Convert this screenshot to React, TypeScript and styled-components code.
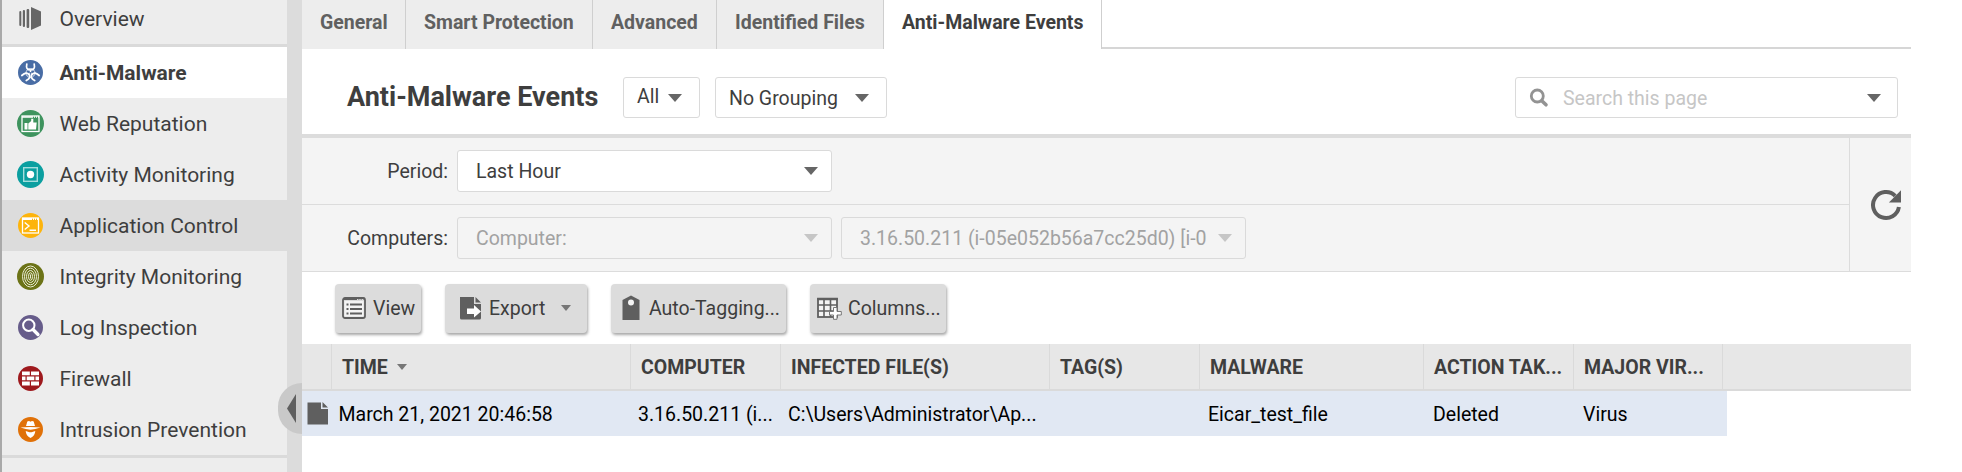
import React from 'react';
import styled, { createGlobalStyle, css } from 'styled-components';

const GlobalStyle = createGlobalStyle`
  * { box-sizing: border-box; }
  body { margin: 0; background: #fff; font-family: Roboto, "Liberation Sans", sans-serif; color: #3e3e3e; overflow: hidden; }
`;

const Page = styled.div`
  display: flex;
  height: 472px;
  width: 1962px;
  overflow: hidden;
`;

const Sidebar = styled.nav`
  width: 287px;
  flex: none;
  background: #ededed;
  border-left: 2px solid #a9a9a9;
`;

const NavItem = styled.div<{ $active?: boolean; $hover?: boolean; $first?: boolean }>`
  display: flex;
  align-items: center;
  height: 51px;
  padding-left: 15px;
  gap: 15.5px;
  font-size: 21px;
  white-space: nowrap;
  ${p => p.$active && css`background: #fff; font-weight: 700;`}
  ${p => p.$hover && css`background: #dcdcdc;`}
  ${p => p.$first && css`height: 44px; padding-bottom: 7px;`}
  svg { flex: none; }
`;

const NavRule = styled.div`
  height: 3px;
  background: #dadada;
`;

const Splitter = styled.div`
  position: relative;
  width: 15px;
  flex: none;
  background: #dcdcdc;
`;

const Collapse = styled.div`
  position: absolute;
  left: -9px;
  top: 383px;
  width: 24px;
  height: 51px;
  background: #c9c9c9;
  border-radius: 26px 0 0 26px / 25.5px 0 0 25.5px;
  svg { position: absolute; left: 9px; top: 11px; }
`;

const Main = styled.main`
  width: 1609px;
  flex: none;
`;

const TabBar = styled.div`
  display: flex;
  height: 49px;
`;

const Tab = styled.div<{ $w: number; $active?: boolean }>`
  width: ${p => p.$w}px;
  padding: 11px 0 0 18px;
  font-size: 19.5px;
  line-height: 24px;
  font-weight: 700;
  white-space: nowrap;
  color: ${p => (p.$active ? '#3e3e3e' : '#606060')};
  background: ${p => (p.$active ? '#fff' : '#ededed')};
  border-right: 1px solid #cfcfcf;
`;

const TabFill = styled.div`
  flex: 1;
  border-bottom: 2px solid #d6d6d6;
`;

const Header = styled.header`
  display: flex;
  align-items: flex-start;
  height: 89px;
  padding: 28px 13px 0 45px;
  border-bottom: 4px solid #dcdcdc;
`;

const Title = styled.h1`
  margin: 0;
  width: 276px;
  font-size: 27px;
  line-height: 41px;
  font-weight: 700;
  white-space: nowrap;
`;

const Field = styled.div<{ $w: number; $h?: number; $pad?: number; $padRight?: number; $disabled?: boolean }>`
  display: flex;
  align-items: center;
  justify-content: space-between;
  width: ${p => p.$w}px;
  height: ${p => p.$h ?? 41}px;
  padding: 0 ${p => p.$padRight ?? 13}px 0 ${p => p.$pad ?? 13}px;
  border: 1px solid #dadada;
  border-radius: 3px;
  font-size: 19.5px;
  white-space: nowrap;
  background: ${p => (p.$disabled ? 'transparent' : '#fff')};
  color: ${p => (p.$disabled ? '#a2a2a2' : '#3e3e3e')};
`;

const ScopeLabel = styled.span`
  padding-bottom: 2px;
`;

const GroupingLabel = styled.span`
  padding-top: 2px;
`;

const HeaderFields = styled.div`
  display: flex;
  gap: 15px;
`;

const Search = styled(Field)`
  margin-left: auto;
  justify-content: flex-start;
`;

const Placeholder = styled.span`
  margin-left: 14px;
  padding-top: 2px;
  flex: 1;
  color: #c6c6c6;
`;

const Filters = styled.section`
  display: flex;
  height: 134px;
  background: #f4f4f4;
  border-bottom: 1px solid #dcdcdc;
`;

const FilterRows = styled.div`
  width: 1548px;
  border-right: 1px solid #dcdcdc;
`;

const FilterRow = styled.div`
  display: flex;
  align-items: center;
  height: 66px;
  gap: 9px;
  &:first-child { height: 67px; border-bottom: 1px solid #dcdcdc; }
`;

const FilterLabel = styled.label`
  width: 146px;
  text-align: right;
  font-size: 19.5px;
`;

const Refresh = styled.div`
  flex: 1;
  padding: 51px 0 0 21px;
`;

const Toolbar = styled.div`
  display: flex;
  gap: 24px;
  height: 72px;
  padding: 12px 0 0 33px;
`;

const ToolButton = styled.div<{ $w: number; $pad?: number; $gap?: number }>`
  display: flex;
  align-items: center;
  width: ${p => p.$w}px;
  height: 48.5px;
  padding-left: ${p => p.$pad ?? 7}px;
  gap: ${p => p.$gap ?? 6}px;
  font-size: 19.5px;
  white-space: nowrap;
  background: #dcdcdc;
  border-radius: 4px;
  box-shadow: 1px 2px 3px rgba(0, 0, 0, 0.35);
`;

const ExportLabel = styled.span`
  margin-right: 9px;
`;

const headColumns = '30px 299px 150px 269px 150px 224px 150px 149px 1fr';
const rowColumns = '28.5px 299.5px 150px 269.5px 150.5px 225px 150px 1fr';

const HeadRow = styled.div`
  display: grid;
  grid-template-columns: ${headColumns};
  height: 47px;
  background: #e7e7e7;
  border-bottom: 2px solid #dadada;
`;

const HeadCell = styled.div`
  display: flex;
  align-items: center;
  gap: 9px;
  padding-top: 1px;
  padding-left: 10px;
  border-right: 1px solid #dadada;
  font-size: 19.5px;
  font-weight: 700;
  white-space: nowrap;
  &:last-child { border-right: 0; }
`;

const DataRow = styled.div`
  display: grid;
  grid-template-columns: ${rowColumns};
  width: 1425px;
  height: 45px;
  background: #e1e8f3;
`;

const Cell = styled.div`
  display: flex;
  align-items: center;
  padding-top: 2px;
  padding-left: 8px;
  font-size: 19.5px;
  color: #000;
  white-space: nowrap;
  &:first-child { padding-left: 5px; padding-top: 0; }
`;

const Caret = ({ w = 14, h = 8, color = '#666' }: { w?: number; h?: number; color?: string }) => (
  <svg width={w} height={h} viewBox="0 0 14 8" preserveAspectRatio="none">
    <path d="M0 0H14L7 8Z" fill={color} />
  </svg>
);

const Disc = ({ color, r = 12.5, children }: { color: string; r?: number; children: React.ReactNode }) => (
  <svg width="27" height="27" viewBox="0 0 27 27">
    <circle cx="13.5" cy="13.5" r={r} fill={color} />
    {children}
  </svg>
);

const OverviewIcon = () => (
  <svg width="27" height="27" viewBox="0 0 27 27" fill="#666">
    <rect x="2.3" y="6" width="2" height="15" rx="1" />
    <rect x="5.8" y="5" width="2.2" height="17" rx="1" />
    <rect x="9.6" y="4" width="2.6" height="19" rx="1" />
    <path d="M14 2L24 6.5V20.5L14 25Z" />
  </svg>
);

const MalwareIcon = () => (
  <Disc color="#496da5">
    <g fill="none" stroke="#fff" strokeLinecap="round">
      <path d="M9.800 5Q8.500 11 13.500 11T17.200 5" strokeWidth="1.700" />
      <path d="M4.800 16.500Q9.500 12.200 12 15.500T9.300 21.500" strokeWidth="1.700" />
      <path d="M22.200 16.500Q17.500 12.200 15 15.500T17.700 21.500" strokeWidth="1.700" />
      <path d="M13.500 11V14M13.500 14L11.500 15.300M13.500 14L15.500 15.300" strokeWidth="1.500" />
      <circle cx="13.500" cy="14" r="4.500" strokeWidth="0.800" />
    </g>
    <circle cx="13.5" cy="14" r="1" fill="#496da5" />
  </Disc>
);

const WebIcon = () => (
  <Disc color="#3e935e" r={13.5}>
    <rect x="5" y="6" width="17" height="15.5" fill="none" stroke="#fff" strokeWidth="1.3" />
    <path d="M5 7H16M17 7H18M19 7H20M21 7H22" stroke="#fff" strokeWidth="1.6" />
    <path d="M7.500 13H10.500V19.500H7.500ZM11.300 13.500L14.200 11V8.800H16.300V12.500H19.700L19 19.500H11.300Z" fill="#fff" />
  </Disc>
);

const ActivityIcon = () => (
  <Disc color="#0b9fa0" r={13.5}>
    <rect x="6.7" y="6.7" width="13.6" height="13.6" fill="none" stroke="#a5dedd" strokeWidth="1.4" />
    <circle cx="13.5" cy="13.5" r="3.7" fill="#fff" />
  </Disc>
);

const AppIcon = () => (
  <Disc color="#fdb40c">
    <rect x="5.5" y="6" width="16" height="15" fill="none" stroke="#fff" strokeWidth="1.3" />
    <path d="M5.500 7H15M16 7H17M18 7H19M20 7H21.500" stroke="#fff" strokeWidth="2" />
    <path d="M7.700 10.500L12 14L7.700 17.500M12.500 18.300H19" fill="none" stroke="#fff" strokeWidth="1.4" />
  </Disc>
);

const IntegrityIcon = () => (
  <Disc color="#6c7317" r={13.5}>
    <g fill="none" stroke="#e9ebd5" strokeWidth="1">
      <ellipse cx="13.5" cy="13.5" rx="8" ry="10.5" />
      <ellipse cx="13.5" cy="13.5" rx="6" ry="8.3" />
      <ellipse cx="13.5" cy="13.5" rx="4" ry="6" />
      <ellipse cx="13.5" cy="13.5" rx="2" ry="3.8" />
      <path d="M13.500 11.500V15.500" />
    </g>
  </Disc>
);

const LogIcon = () => (
  <Disc color="#665c8a">
    <circle cx="11.8" cy="11.3" r="5.7" fill="none" stroke="#fff" strokeWidth="2" />
    <path d="M16 15.500L21 20.500" stroke="#fff" strokeWidth="3.3" strokeLinecap="round" />
  </Disc>
);

const FirewallIcon = () => (
  <Disc color="#9e191d">
    <path fill="#fff" d="M5 6.500H12.800V10.200H5ZM14 6.500H22V10.200H14ZM5 11.500H8.500V15.300H5ZM9.700 11.500H17.300V15.300H9.700ZM18.500 11.500H22V15.300H18.500ZM5 16.600H12.800V20.500H5ZM14 16.600H22V20.500H14Z" />
  </Disc>
);

const IntrusionIcon = () => (
  <Disc color="#e07108">
    <path fill="#fff" d="M9 10L10.300 5.500Q12 4.500 13.500 5.700Q15 4.500 16.700 5.500L18 10ZM3.500 11.600Q8 10.900 13.500 10.900T23.500 11.600Q18 13.700 13.500 13.700T3.500 11.600Z" />
    <path fill="#fff" d="M8.700 15L12.500 16.200H14.500L18.300 15Q18 20 13.500 22Q9 20 8.700 15Z" />
  </Disc>
);

const SearchIcon = () => (
  <svg width="20" height="20" viewBox="0 0 20 20" fill="none" stroke="#939393">
    <circle cx="8.3" cy="8" r="6" strokeWidth="2.8" />
    <path d="M13 13L17 16.800" strokeWidth="3.6" strokeLinecap="round" />
  </svg>
);

const RefreshIcon = () => (
  <svg width="31" height="32" viewBox="0 0 31 32">
    <path d="M24.200 6.800A13 13 0 1 0 27.900 18" fill="none" stroke="#5f5f5f" strokeWidth="4" />
    <path d="M30 1.200V13.500H17.900Z" fill="#5f5f5f" />
  </svg>
);

const ViewIcon = () => (
  <svg width="25" height="22" viewBox="0 0 25 22">
    <rect x="1" y="1" width="22" height="20" rx="2" fill="none" stroke="#5f5f5f" strokeWidth="1.8" />
    <path d="M1 2H15M16 1.500H17.500M18.500 1.500H20M21 1.500H22.500" stroke="#5f5f5f" strokeWidth="2" />
    <rect x="2.5" y="4" width="19" height="15.5" fill="#f4f4f4" />
    <path d="M4.500 7.500H6.500M4.500 12H6.500M4.500 16.500H6.500M8 7.500H20M8 12H20M8 16.500H20" stroke="#5f5f5f" strokeWidth="2" />
  </svg>
);

const ExportIcon = () => (
  <svg width="22" height="24" viewBox="0 0 22 24">
    <path d="M0 1H14V8H21V22Q21 23.500 19.500 23.500H1.500Q0 23.500 0 22ZM15.500 1L21 6.500H15.500Z" fill="#5f5f5f" />
    <path d="M7 12.500H14V9L21 15.500L14 21.500V18H7Z" fill="#fff" />
  </svg>
);

const TagIcon = () => (
  <svg width="18" height="26" viewBox="0 0 18 26">
    <path d="M0.500 5L9 0.500L17.500 5V25H0.500Z" fill="#5f5f5f" />
    <circle cx="9" cy="7.5" r="3" fill="#f4f4f4" />
  </svg>
);

const ColumnsIcon = () => (
  <svg width="25" height="23" viewBox="0 0 25 23">
    <rect x="1" y="2" width="19" height="18" fill="#f4f4f4" stroke="#5f5f5f" strokeWidth="1.8" />
    <path d="M0.100 2H20.900" stroke="#5f5f5f" strokeWidth="2.5" />
    <path d="M7 1V20M13.500 1V20M1 8H20M1 14H20" stroke="#5f5f5f" strokeWidth="1.6" />
    <path d="M16.500 10.500H20V14.500H24.300V18H20V22.300H16.500V18H12.500V14.500H16.500Z" fill="#fff" stroke="#777" strokeWidth="1" />
  </svg>
);

const FileIcon = () => (
  <svg width="22" height="23" viewBox="0 0 22 23">
    <path d="M0.500 0.500H14V7H21V22.500H0.500ZM15.500 0L21 5.500H15.500Z" fill="#5f5f5f" />
  </svg>
);

export default function App() {
  return (
    <>
      <GlobalStyle />
      <Page>
        <Sidebar>
          <NavItem $first><OverviewIcon />Overview</NavItem>
          <NavRule />
          <NavItem $active><MalwareIcon />Anti-Malware</NavItem>
          <NavItem><WebIcon />Web Reputation</NavItem>
          <NavItem><ActivityIcon />Activity Monitoring</NavItem>
          <NavItem $hover><AppIcon />Application Control</NavItem>
          <NavItem><IntegrityIcon />Integrity Monitoring</NavItem>
          <NavItem><LogIcon />Log Inspection</NavItem>
          <NavItem><FirewallIcon />Firewall</NavItem>
          <NavItem><IntrusionIcon />Intrusion Prevention</NavItem>
          <NavRule />
        </Sidebar>
        <Splitter>
          <Collapse>
            <svg width="9" height="29" viewBox="0 0 9 29"><path d="M9 0V29L0 14.500Z" fill="#5f5f5f" /></svg>
          </Collapse>
        </Splitter>
        <Main>
          <TabBar>
            <Tab $w={104}>General</Tab>
            <Tab $w={187}>Smart Protection</Tab>
            <Tab $w={124}>Advanced</Tab>
            <Tab $w={167}>Identified Files</Tab>
            <Tab $w={218} $active>Anti-Malware Events</Tab>
            <TabFill />
          </TabBar>
          <Header>
            <Title>Anti-Malware Events</Title>
            <HeaderFields>
              <Field $w={77} $padRight={17}><ScopeLabel>All</ScopeLabel><Caret /></Field>
              <Field $w={172} $padRight={17}><GroupingLabel>No Grouping</GroupingLabel><Caret /></Field>
            </HeaderFields>
            <Search $w={383} $padRight={16}>
              <SearchIcon />
              <Placeholder>Search this page</Placeholder>
              <Caret />
            </Search>
          </Header>
          <Filters>
            <FilterRows>
              <FilterRow>
                <FilterLabel>Period:</FilterLabel>
                <Field $w={375} $h={42} $pad={18}>Last Hour<Caret /></Field>
              </FilterRow>
              <FilterRow>
                <FilterLabel>Computers:</FilterLabel>
                <Field $w={375} $h={42} $pad={18} $disabled>Computer:<Caret color="#c6c6c6" /></Field>
                <Field $w={405} $h={42} $pad={18} $disabled>3.16.50.211 (i-05e052b56a7cc25d0) [i-0<Caret color="#c6c6c6" /></Field>
              </FilterRow>
            </FilterRows>
            <Refresh><RefreshIcon /></Refresh>
          </Filters>
          <Toolbar>
            <ToolButton $w={86}><ViewIcon />View</ToolButton>
            <ToolButton $w={142} $pad={15} $gap={7}><ExportIcon /><ExportLabel>Export</ExportLabel><Caret w={10} h={6} color="#777" /></ToolButton>
            <ToolButton $w={175} $pad={11} $gap={9}><TagIcon />Auto-Tagging...</ToolButton>
            <ToolButton $w={136}><ColumnsIcon />Columns...</ToolButton>
          </Toolbar>
          <HeadRow>
            <HeadCell />
            <HeadCell>TIME<Caret w={10} h={6} color="#777" /></HeadCell>
            <HeadCell>COMPUTER</HeadCell>
            <HeadCell>INFECTED FILE(S)</HeadCell>
            <HeadCell>TAG(S)</HeadCell>
            <HeadCell>MALWARE</HeadCell>
            <HeadCell>ACTION TAK...</HeadCell>
            <HeadCell>MAJOR VIR...</HeadCell>
            <HeadCell />
          </HeadRow>
          <DataRow>
            <Cell><FileIcon /></Cell>
            <Cell>March 21, 2021 20:46:58</Cell>
            <Cell>3.16.50.211 (i...</Cell>
            <Cell>C:\Users\Administrator\Ap...</Cell>
            <Cell />
            <Cell>Eicar_test_file</Cell>
            <Cell>Deleted</Cell>
            <Cell>Virus</Cell>
          </DataRow>
        </Main>
      </Page>
    </>
  );
}
